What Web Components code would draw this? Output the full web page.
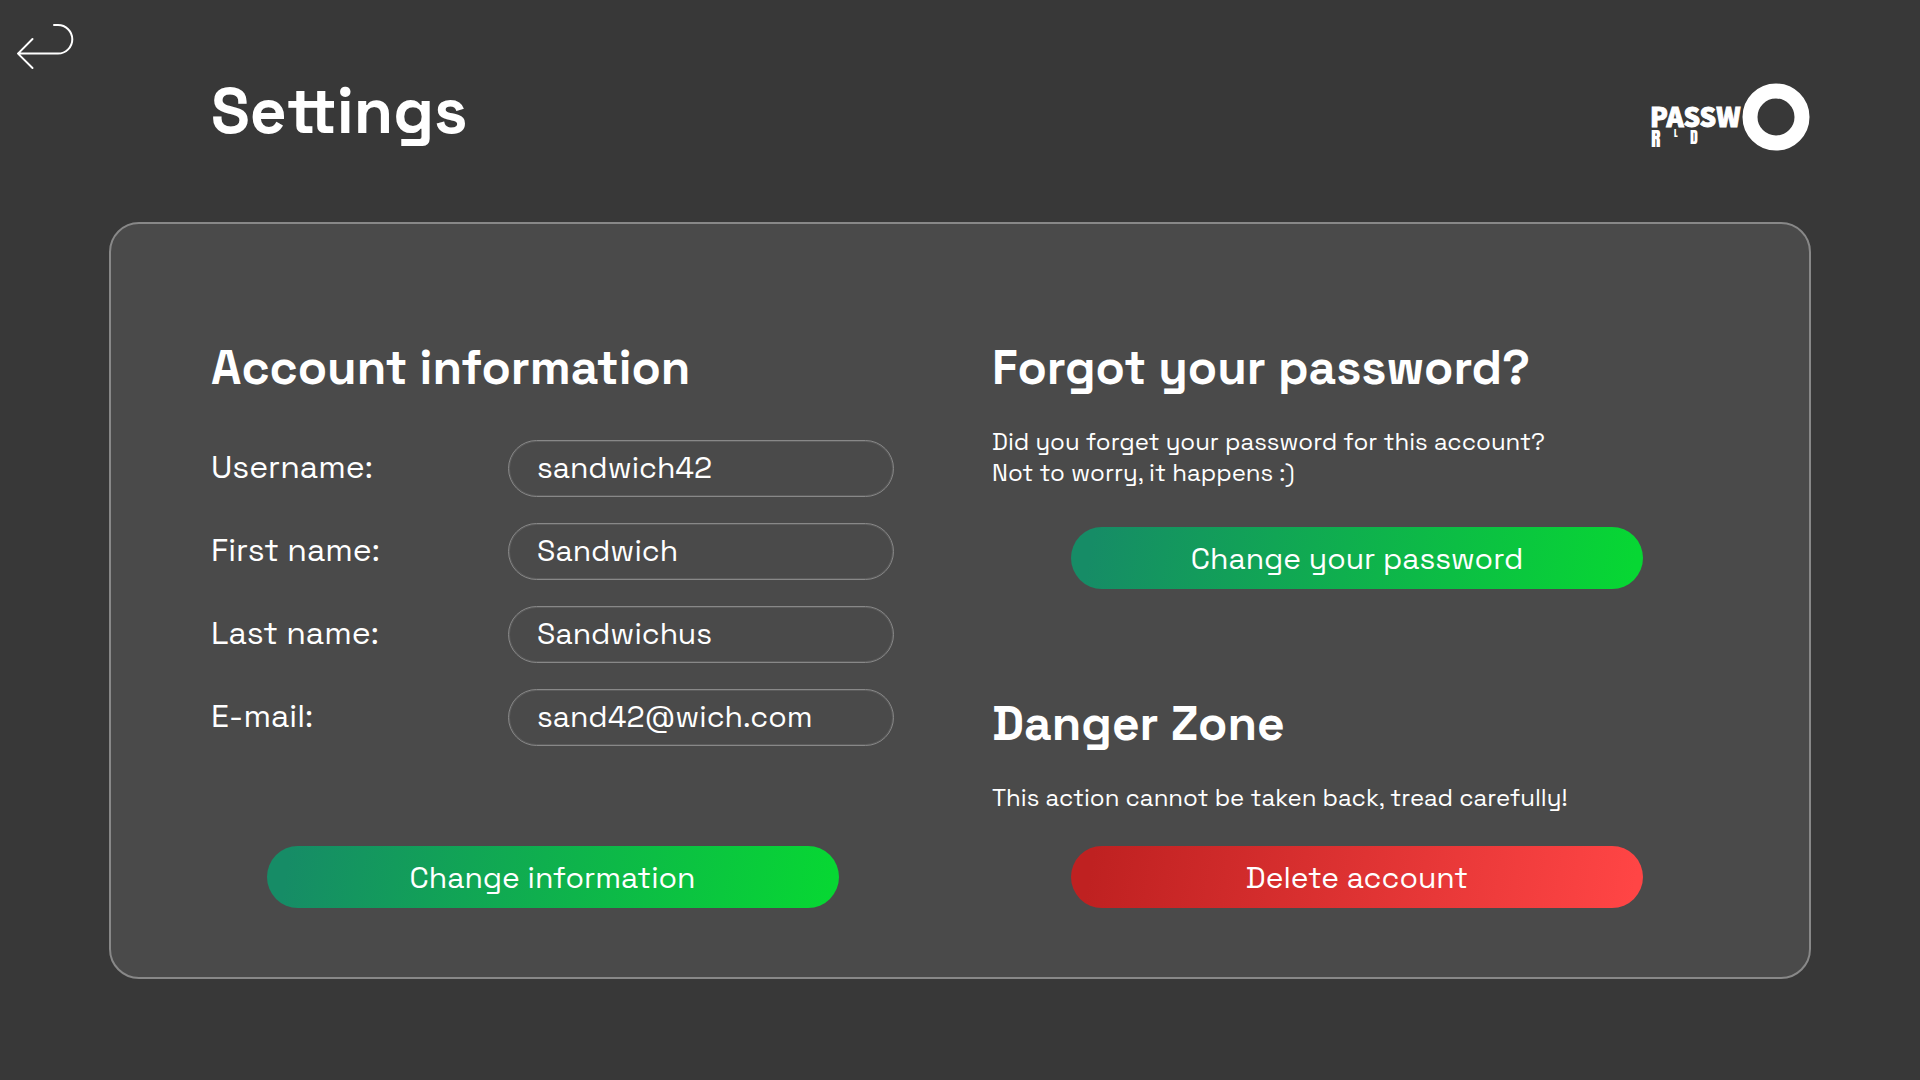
<!DOCTYPE html>
<html lang="en">
<head>
<meta charset="utf-8">
<title>Settings</title>
<style>
  body {
    margin: 0;
    background: #383838;
    color: #fff;
    font-family: "Space Grotesk", Inter, sans-serif;
  }
</style>
</head>
<body>
<settings-page></settings-page>

<script>
class ShadowElement extends HTMLElement {
  connectedCallback() {
    if (this.shadowRoot) return;
    this.attachShadow({ mode: 'open' }).innerHTML = this.render();
  }
}

customElements.define('back-button', class extends ShadowElement {
  render() {
    return `
      <style>
        :host { display: block; }
        button { display: block; padding: 0; border: 0; background: none; color: inherit; cursor: pointer; }
        svg { display: block; }
      </style>
      <button type="button" aria-label="Back">
        <svg width="60" height="48" viewBox="0 0 60 48" fill="none" stroke="currentColor" stroke-width="2" stroke-linecap="round" stroke-linejoin="round">
          <path d="M38 3h4a14.300 14.300 0 0 1 0 28.600H2M16.500 17 2 31.600 16.500 46"/>
        </svg>
      </button>`;
  }
});

customElements.define('brand-logo', class extends ShadowElement {
  render() {
    return `
      <style>
        :host { display: block; }
        svg { display: block; overflow: visible; }
        text { font-family: Impact, Anton, "Noto Sans CJK SC", sans-serif; font-weight: 400; fill: currentColor; }
        .main { font: 900 26px "Noto Sans CJK SC", sans-serif; stroke: currentColor; stroke-width: 1; }
      </style>
      <svg width="160" height="68" viewBox="1 0 160 68" role="img" aria-label="Passworld">
        <text class="main" x="0" y="44">PASSW</text>
        <text x="1" y="64" font-size="20">R</text>
        <text x="24" y="54" font-size="9">L</text>
        <text x="40" y="61" font-size="16">D</text>
        <circle cx="126" cy="34" r="26" fill="none" stroke="currentColor" stroke-width="15"/>
      </svg>`;
  }
});

customElements.define('settings-field', class extends ShadowElement {
  render() {
    return `
      <style>
        :host { display: grid; grid-template-columns: minmax(0, 297fr) minmax(0, 386fr); align-items: center; }
        label { padding-bottom: 3px; font-size: 32px; line-height: 40px; white-space: nowrap; }
        input {
          box-sizing: border-box; width: 100%; height: 57px; padding: 0 28px 2px;
          border: 1px solid #888; border-radius: 29px; outline: 0;
          box-shadow: inset 0 0 0 1px #5c5c5c;
          background: none; color: inherit; font: inherit; font-size: 30px;
        }
      </style>
      <label for="control">${this.getAttribute('label')}</label>
      <input id="control" type="${this.getAttribute('type') || 'text'}" value="${this.getAttribute('value')}">`;
  }
});

customElements.define('action-button', class extends ShadowElement {
  render() {
    return `
      <style>
        :host { display: block; width: 100%; max-width: 572px; --from: #168c66; --to: #07d733; }
        :host([variant="danger"]) { --from: #bf2121; --to: #ff4545; }
        button {
          display: block; width: 100%; height: 62px; padding: 0; border: 0; border-radius: 31px;
          background: linear-gradient(100deg, var(--from) 4%, var(--to) 98%);
          color: inherit; font: inherit; font-size: 30px; cursor: pointer;
        }
      </style>
      <button type="button"><slot></slot></button>`;
  }
});

customElements.define('settings-section', class extends ShadowElement {
  render() {
    return `
      <style>
        :host { display: flex; flex-direction: column; }
        h2 { margin: 0; font-size: 48px; line-height: 60px; font-weight: 700; }
        .body { display: block; margin-top: 28px; font-size: 24px; line-height: 31px; }
        :host([kind="form"]) .body { display: flex; flex-direction: column; gap: 26px; margin-top: 42px; }
        .action { display: flex; justify-content: center; margin-top: 39px; }
        :host([kind="form"]) .action { margin-top: auto; }
        :host([kind="danger"]) .action { margin-top: 33px; }
      </style>
      <h2>${this.getAttribute('heading')}</h2>
      <div class="body"><slot></slot></div>
      <div class="action"><slot name="action"></slot></div>`;
  }
});

customElements.define('settings-panel', class extends ShadowElement {
  render() {
    return `
      <style>
        :host {
          display: grid; grid-template-columns: minmax(0, 683fr) minmax(0, 730fr); column-gap: 98px;
          padding: 114px 87px 69px 100px;
          border: 2px solid #888; border-radius: 30px; background: #4a4a4a;
        }
        .column { display: flex; flex-direction: column; gap: 105px; }
        ::slotted([slot="left"]) { flex: 1; }
      </style>
      <div class="column"><slot name="left"></slot></div>
      <div class="column"><slot name="right"></slot></div>`;
  }
});

customElements.define('settings-page', class extends ShadowElement {
  render() {
    return `
      <style>
        :host { display: block; box-sizing: border-box; min-height: 100vh; padding-bottom: 101px; }
        nav { padding: 22px 16px 1px; }
        header { display: flex; align-items: flex-end; justify-content: space-between; margin: 0 109px 71px; padding-left: 102px; }
        h1 { margin: 0; font-size: 64px; line-height: 80px; font-weight: 700; }
        settings-panel { margin: 0 109px; }
      </style>
      <nav><back-button></back-button></nav>
      <header>
        <h1>Settings</h1>
        <brand-logo></brand-logo>
      </header>
      <settings-panel>
        <settings-section slot="left" kind="form" heading="Account information">
          <settings-field label="Username:" value="sandwich42"></settings-field>
          <settings-field label="First name:" value="Sandwich"></settings-field>
          <settings-field label="Last name:" value="Sandwichus"></settings-field>
          <settings-field label="E-mail:" type="email" value="sand42@wich.com"></settings-field>
          <action-button slot="action">Change information</action-button>
        </settings-section>
        <settings-section slot="right" heading="Forgot your password?">
          Did you forget your password for this account?<br>Not to worry, it happens :)
          <action-button slot="action">Change your password</action-button>
        </settings-section>
        <settings-section slot="right" kind="danger" heading="Danger Zone">
          This action cannot be taken back, tread carefully!
          <action-button slot="action" variant="danger">Delete account</action-button>
        </settings-section>
      </settings-panel>`;
  }
});
</script>
</body>
</html>
